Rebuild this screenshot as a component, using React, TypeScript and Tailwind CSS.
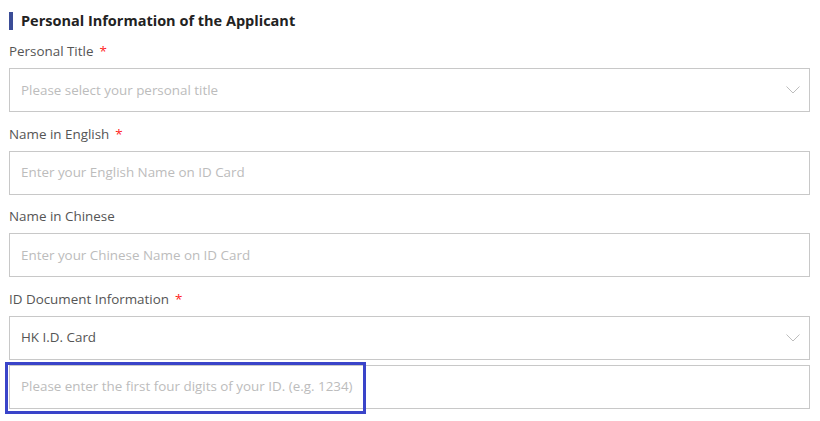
import { ReactNode } from "react";

const font = { fontFamily: "'Open Sans', 'Noto Sans', sans-serif" };

const Chevron = () => (
  <svg width="14" height="8" viewBox="0 0 14 8" className="shrink-0">
    <path d="M0.5 0.5 L7 7 L13.5 0.5" fill="none" stroke="#bdbdbd" strokeWidth="1" />
  </svg>
);

type FieldProps = {
  label: string;
  required?: boolean;
  children: ReactNode;
};

const Field = ({ label, required, children }: FieldProps) => (
  <div className="flex flex-col">
    <p className="text-[13.4px] leading-[20px] text-[#555] mb-[7px]">
      {label}
      {required && <span className="text-[#ff1f1f] ml-[6px]">*</span>}
    </p>
    {children}
  </div>
);

const Box = ({
  text,
  placeholder,
  select,
}: {
  text: string;
  placeholder?: boolean;
  select?: boolean;
}) => (
  <div className="h-[44px] border border-[#c8c8c8] bg-white flex items-center justify-between pl-[11px] pr-[9px]">
    <span
      className={
        placeholder
          ? "text-[13.4px] text-[#bcbcbc]"
          : "text-[13.4px] text-[#555]"
      }
    >
      {text}
    </span>
    {select && <Chevron />}
  </div>
);

export default function App() {
  return (
    <div className="bg-white min-h-screen pl-[9px] pr-[10px] pt-[12px]" style={font}>
      <div className="flex items-center gap-[8px] h-[18px]">
        <div className="w-[4px] h-[18px] bg-[#3b4d97]" />
        <h2 className="text-[14.5px] font-bold text-[#222]">
          Personal Information of the Applicant
        </h2>
      </div>
      <div className="flex flex-col gap-[11.5px] mt-[11px]">
        <Field label="Personal Title" required>
          <Box text="Please select your personal title" placeholder select />
        </Field>
        <Field label="Name in English" required>
          <Box text="Enter your English Name on ID Card" placeholder />
        </Field>
        <Field label="Name in Chinese">
          <Box text="Enter your Chinese Name on ID Card" placeholder />
        </Field>
        <Field label="ID Document Information" required>
          <div className="flex flex-col gap-[5px]">
            <Box text="HK I.D. Card" select />
            <div className="relative">
              <Box
                text="Please enter the first four digits of your ID. (e.g. 1234)"
                placeholder
              />
              <div className="absolute -left-[4px] -top-[3px] w-[361px] h-[52px] border-[3px] border-[#3a44c9] pointer-events-none" />
            </div>
          </div>
        </Field>
      </div>
    </div>
  );
}
